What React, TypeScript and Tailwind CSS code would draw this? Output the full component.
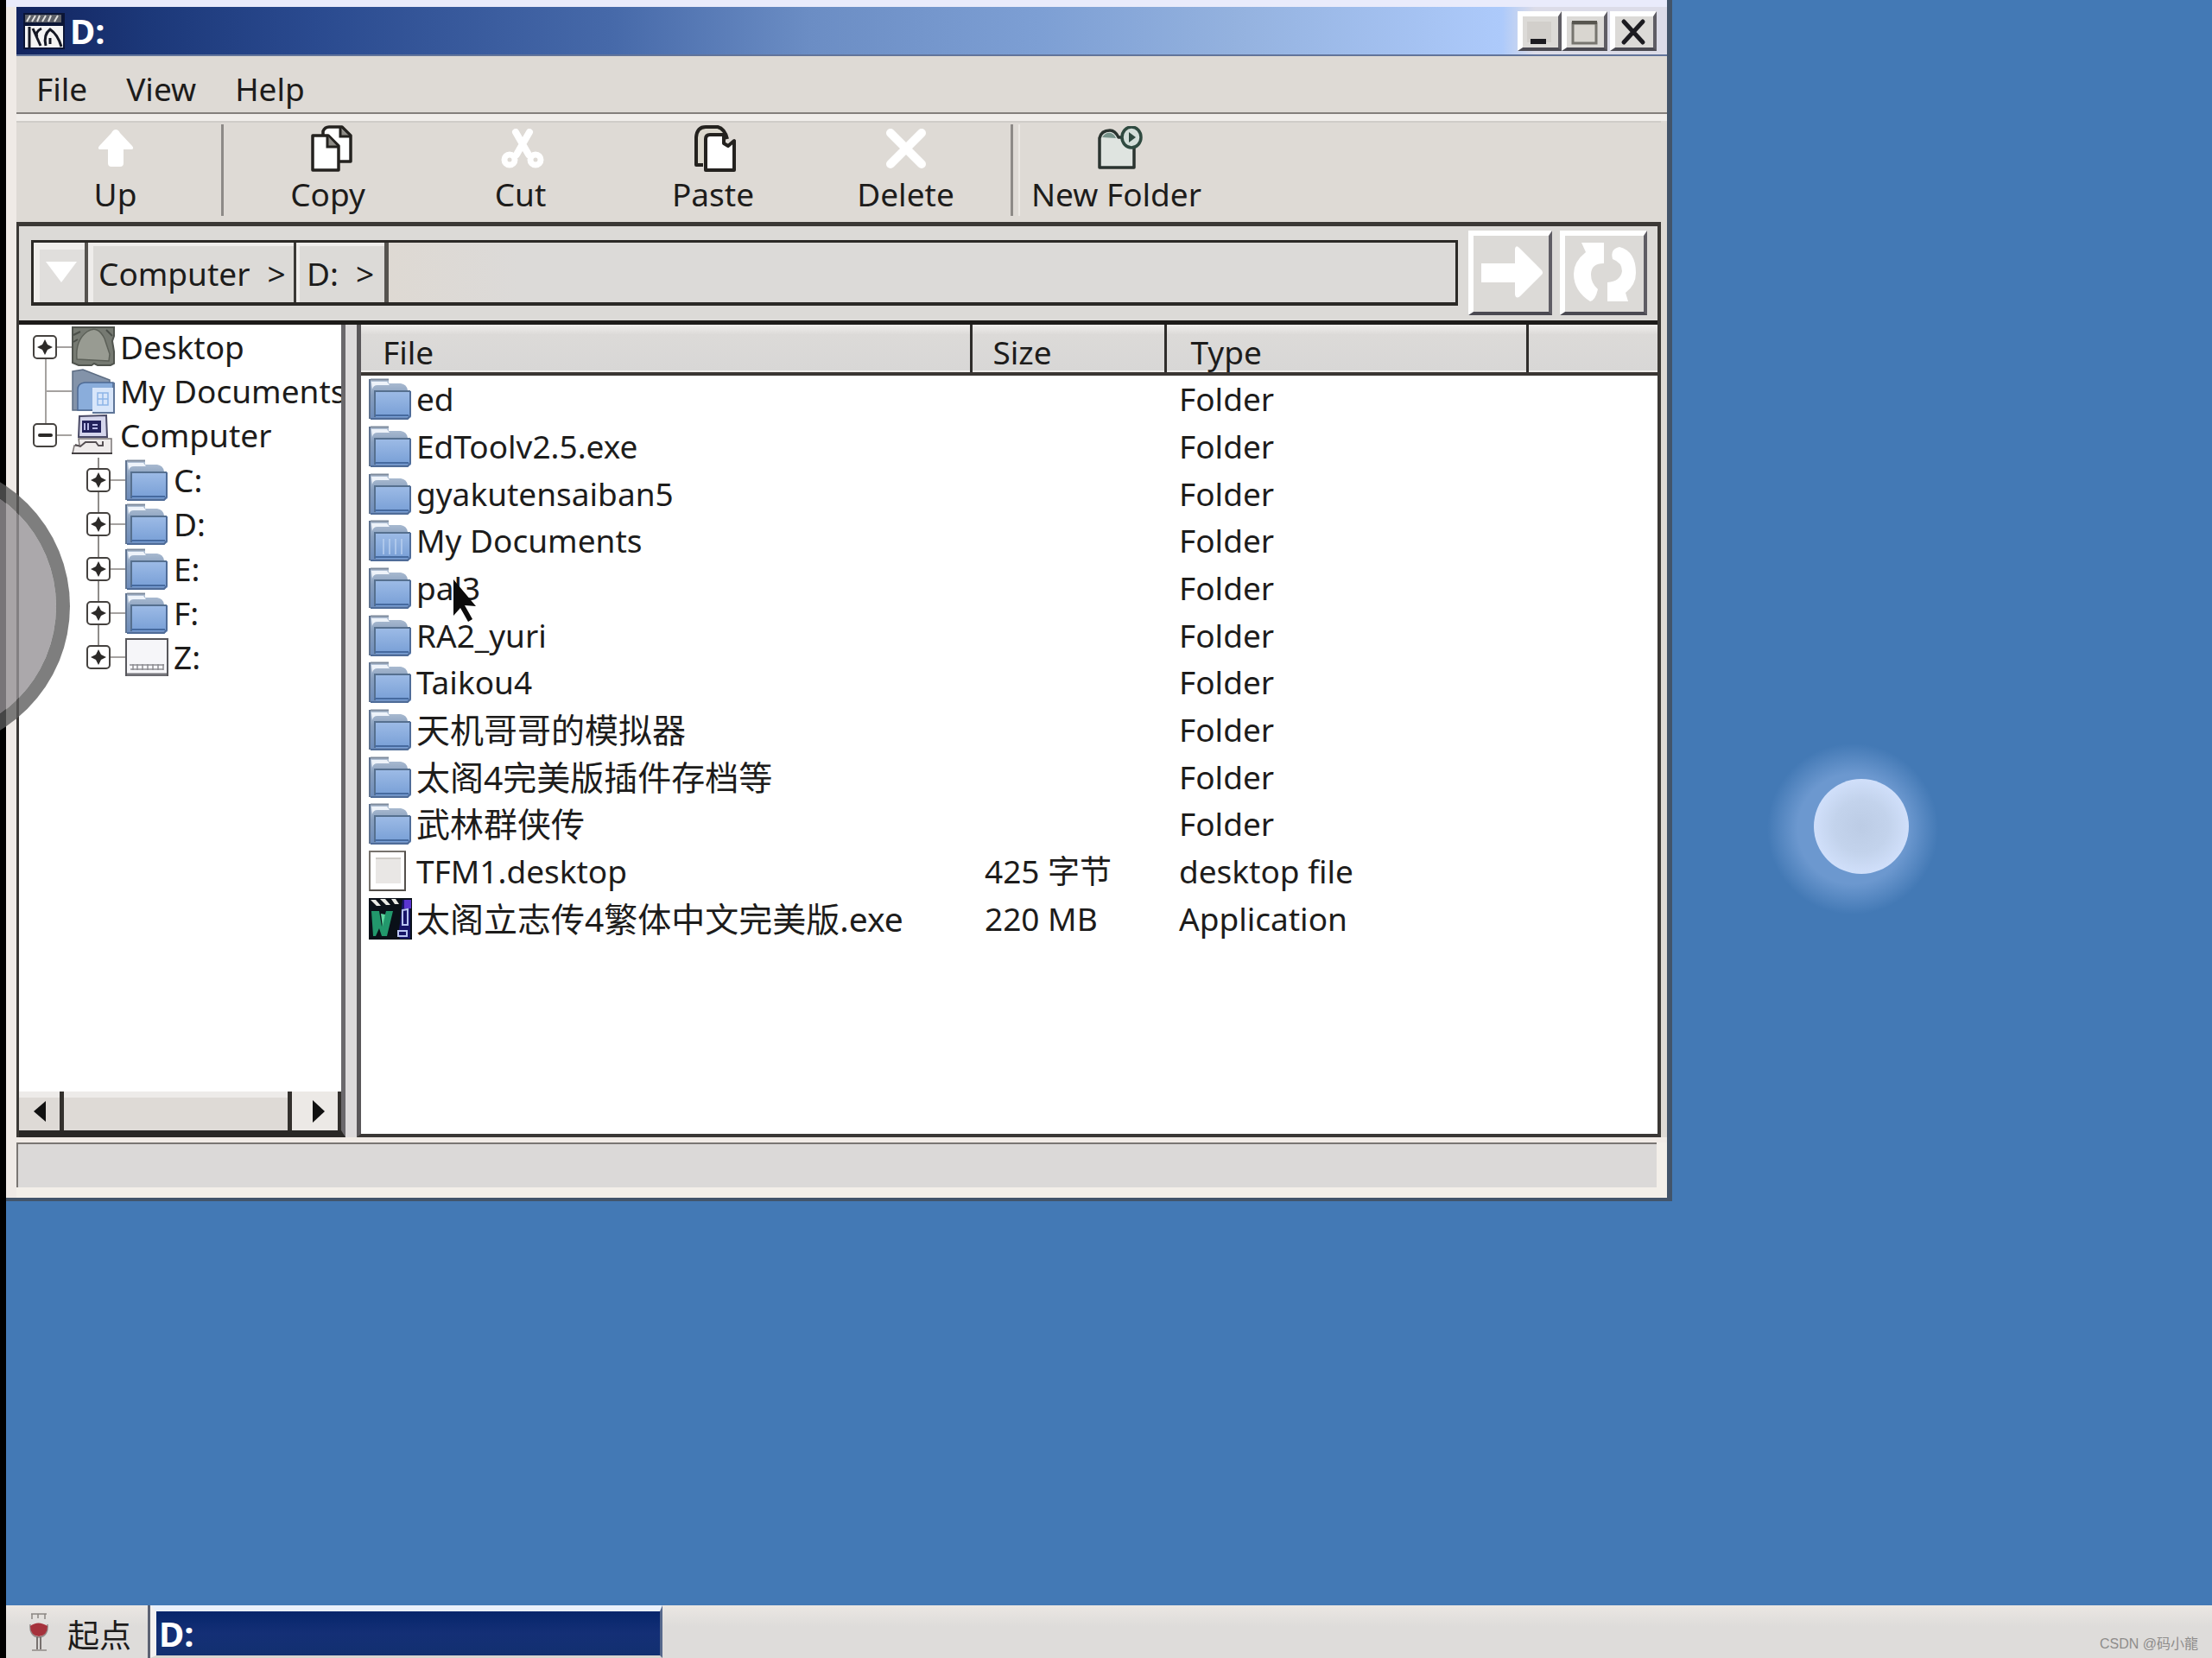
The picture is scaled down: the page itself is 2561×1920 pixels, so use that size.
import React from "react";

type Entry = { name: string; size?: string; type: string; icon: "folder" | "docs" | "file" | "app"; han?: boolean };

const entries: Entry[] = [
  { name: "ed", type: "Folder", icon: "folder" },
  { name: "EdToolv2.5.exe", type: "Folder", icon: "folder" },
  { name: "gyakutensaiban5", type: "Folder", icon: "folder" },
  { name: "My Documents", type: "Folder", icon: "docs" },
  { name: "pal3", type: "Folder", icon: "folder" },
  { name: "RA2_yuri", type: "Folder", icon: "folder" },
  { name: "Taikou4", type: "Folder", icon: "folder" },
  { name: "天机哥哥的模拟器", type: "Folder", icon: "folder", han: true },
  { name: "太阁4完美版插件存档等", type: "Folder", icon: "folder", han: true },
  { name: "武林群侠传", type: "Folder", icon: "folder", han: true },
  { name: "TFM1.desktop", size: "425 字节", type: "desktop file", icon: "file" },
  { name: "太阁立志传4繁体中文完美版.exe", size: "220 MB", type: "Application", icon: "app", han: true },
];

function FolderIcon({ docs = false }: { docs?: boolean }) {
  return (
    <svg viewBox="0 0 50 48" className="h-12 w-[50px] shrink-0" aria-hidden="true">
      <defs>
        <linearGradient id="front" x1="0" y1="0" x2="0" y2="1">
          <stop offset="0" stopColor="#9dbbe6" />
          <stop offset="1" stopColor="#789fd6" />
        </linearGradient>
        <linearGradient id="back" x1="0" y1="0" x2="0" y2="1">
          <stop offset="0" stopColor="#b4c3d6" />
          <stop offset="0.4" stopColor="#889fbe" />
          <stop offset="1" stopColor="#6d8cbb" />
        </linearGradient>
      </defs>
      <path d="M1 1h22v5h14q7 1 8 8l4 1v30l-3 2H1z" fill="url(#back)" />
      <path d="M2 1.5h21" stroke="#7d8a9c" strokeWidth="2" fill="none" />
      <path d="M3 4h18l3 4H10q-5 0-6 5z" fill="#eef3fa" />
      <path d="M1 1v46" stroke="#5f7390" strokeWidth="2" />
      <rect x="7" y="15" width="41" height="30" fill="url(#front)" />
      <path d="M7 45V15h41" stroke="#56708f" strokeWidth="2" fill="none" />
      <path d="M7 43h39" stroke="#466a9f" strokeWidth="2" />
      <path d="M48 15v28l-3 4H2" stroke="#4f6c98" strokeWidth="2" fill="none" />
      {docs && (
        <path d="M17 22v18M24 22v18M31 22v18M38 22v18" stroke="#bcd2f1" strokeWidth="2" opacity="0.7" />
      )}
    </svg>
  );
}

function FileIcon() {
  return (
    <svg viewBox="0 0 50 48" className="h-12 w-[50px] shrink-0" aria-hidden="true">
      <rect x="1" y="1" width="41" height="45" fill="#fff" stroke="#77736e" strokeWidth="2" />
      <path d="M42 1v45H1" stroke="#54504c" strokeWidth="2" fill="none" />
      <path d="M8 8h29v30H8z" fill="#e9e7e5" />
      <path d="M8 9h29" stroke="#cfccc8" strokeWidth="2" />
    </svg>
  );
}

function AppIcon() {
  return (
    <svg viewBox="0 0 50 48" className="h-12 w-[50px] shrink-0" aria-hidden="true">
      <rect width="50" height="48" fill="#0a1018" />
      <path d="M2 2h6l6 7H9zM13 1h6l6 7h-5zM26 1h5l4 6h-5z" fill="#e9e9e4" />
      <path d="M3 15h9l3 18 5-18h8l-7 29h-6l-3-9-4 9H5z" fill="#22986c" />
      <path d="M14 18l5 1-3 14z" fill="#5ed8a0" />
      <path d="M39 2h9v45H36l-2-4 2-14z" fill="#171468" />
      <path d="M41 2h8v10h-8z" fill="#5a35cf" />
      <path d="M39 14l6-1v18h-6zM34 38h10v6H34z" fill="none" stroke="#b9c4f2" strokeWidth="2" />
    </svg>
  );
}

function DesktopIcon() {
  return (
    <svg viewBox="0 0 50 48" className="h-12 w-[50px] shrink-0" aria-hidden="true">
      <path d="M1 1h48v10l-2 6 2 12v14l-4 2H30l-4-2-3 2H8l-7-3z" fill="#767a72" stroke="#50544e" strokeWidth="2" />
      <path d="M6 38q-2-22 12-32 12-8 20 8l6 18-1 8z" fill="#989b92" stroke="#5c6058" strokeWidth="1.5" />
      <path d="M2 10l8-4M2 18l5-3M40 4l7 7" stroke="#4b4f49" strokeWidth="2" />
    </svg>
  );
}

function DocumentsIcon() {
  return (
    <svg viewBox="0 0 50 52" className="h-[52px] w-[50px] shrink-0" aria-hidden="true">
      <path d="M1 3l12-2 31 12v5h4v30H1z" fill="#8393a9" stroke="#5c6c82" strokeWidth="1.5" />
      <path d="M7 48V24q0-7 8-8h33v32z" fill="#8aaddb" stroke="#4d6a94" strokeWidth="1.5" />
      <path d="M24 22h25v29H24z" fill="#d8e6fa" />
      <path d="M30 28h12v14H30zM36 28v14M30 35h12" fill="none" stroke="#8db5e8" strokeWidth="1.5" />
      <path d="M49 16v35H24" fill="none" stroke="#5e7598" strokeWidth="2" />
    </svg>
  );
}

function ComputerIcon() {
  return (
    <svg viewBox="0 0 50 50" className="h-[50px] w-[50px] shrink-0" aria-hidden="true">
      <path d="M9 3l31-1 1 25H8z" fill="#d5d6ec" stroke="#4a4a66" strokeWidth="2" />
      <path d="M12 8h22v14H12z" fill="#23235c" />
      <path d="M15 11v8M19 11v8M24 13h6M24 17h6" stroke="#b9bbe8" strokeWidth="2" />
      <path d="M8 29h38v17H1l2-9h6z" fill="#efecec" stroke="#7b7575" strokeWidth="1.5" />
      <path d="M4 36l6 2 6-5h12l3 4h5v-5" fill="none" stroke="#544e52" strokeWidth="2" />
      <path d="M0 46h47" stroke="#433f42" strokeWidth="2" />
    </svg>
  );
}

function DriveIcon() {
  return (
    <svg viewBox="0 0 50 46" className="h-[46px] w-[50px] shrink-0" aria-hidden="true">
      <rect x="1" y="2" width="48" height="42" fill="#f6f6f9" stroke="#57575c" strokeWidth="2" />
      <path d="M5 32h40M6 37h38M9 31v7M14 31v7M20 31v7M26 31v7M32 31v7M38 31v7M44 31v7" stroke="#8d8d92" strokeWidth="1.5" />
      <path d="M2 43h46" stroke="#77777c" strokeWidth="3" />
    </svg>
  );
}

function Expander({ open = false }: { open?: boolean }) {
  return (
    <button type="button" aria-label={open ? "Collapse" : "Expand"} className="relative z-10 h-7 w-7 shrink-0">
      <svg viewBox="0 0 28 28" className="h-7 w-7" aria-hidden="true">
        <rect x="1" y="1" width="26" height="26" rx="4" fill="#fff" stroke="#45423f" strokeWidth="2" />
        {open ? (
          <path d="M8 14h13" stroke="#2c2a28" strokeWidth="4" strokeLinecap="round" />
        ) : (
          <path d="M14 5l3 6 6 3-6 3-3 6-3-6-6-3 6-3z" fill="#2c2a28" />
        )}
      </svg>
    </button>
  );
}

function Drive({ name, last = false }: { name: string; last?: boolean }) {
  return (
    <li className="relative flex items-center pl-[78px]">
      <span className={`absolute left-[91px] top-0 w-0.5 bg-[#8f8c8a] ${last ? "h-1/2" : "h-full"}`} />
      <Expander />
      <span className="h-0.5 w-[17px] bg-[#a5a2a0]" />
      {last ? <DriveIcon /> : <FolderIcon />}
      <span className="pl-1.5">{name}</span>
    </li>
  );
}

function Tree() {
  return (
    <ul className="grid h-[411px] auto-rows-fr whitespace-nowrap">
      <li className="relative flex items-center pl-4">
        <span className="absolute bottom-0 left-[30px] h-1/2 w-0.5 bg-[#a5a2a0]" />
        <Expander />
        <span className="h-0.5 w-[17px] bg-[#a5a2a0]" />
        <DesktopIcon />
        <span className="pl-1.5">Desktop</span>
      </li>
      <li className="relative flex items-center pl-[30px]">
        <span className="absolute left-[30px] top-0 h-full w-0.5 bg-[#a5a2a0]" />
        <span className="h-0.5 w-[31px] bg-[#a5a2a0]" />
        <DocumentsIcon />
        <span className="pl-1.5">My Documents</span>
      </li>
      <li className="relative flex items-center pl-4">
        <span className="absolute left-[30px] top-0 h-1/2 w-0.5 bg-[#a5a2a0]" />
        <Expander open />
        <span className="h-0.5 w-[17px] bg-[#a5a2a0]" />
        <ComputerIcon />
        <span className="pl-1.5">Computer</span>
      </li>
      <Drive name="C:" />
      <Drive name="D:" />
      <Drive name="E:" />
      <Drive name="F:" />
      <Drive name="Z:" last />
    </ul>
  );
}

function ToolButton({ label, children }: { label: string; children: React.ReactNode }) {
  return (
    <button type="button" className="flex w-[223px] flex-col items-center">
      <span className="flex h-14 items-center">{children}</span>
      <span className="leading-[50px]">{label}</span>
    </button>
  );
}

const bevel =
  "flex items-center justify-center border-l-[6px] border-t-[6px] border-b-4 border-r-4 border-l-white border-t-white border-b-[#4b4a52] border-r-[#5f5d64] bg-[#dcdad7]";

function TitleBar() {
  return (
    <header className="flex h-[57px] items-center border-b-2 border-[#62749a] bg-[linear-gradient(90deg,#12245f_0%,#1c3879_8%,#2a4a8f_18%,#4669a9_36%,#6b8dc4_48%,#7d9fd4_62%,#94b2df_74%,#adcafb_90%,#dcdce8_92%)] pl-2 pr-3 text-white">
      <svg viewBox="0 0 48 42" className="h-[42px] w-12" aria-hidden="true">
        <rect width="48" height="42" fill="#0b1536" />
        <path d="M2 2h42v9H2z" fill="#5d6068" />
        <path d="M4 10l4-7M10 10l4-7M16 10l3-7M22 10l4-7M29 10l3-7M36 10l4-7" stroke="#dedede" strokeWidth="2" />
        <path d="M2 15h44v25H2z" fill="#f4f4f4" />
        <path d="M7 16v24M11 18l9 20M21 18q-8 4-5 10M26 38q-3-13 5-19 9 6 13 20M31 29v7" fill="none" stroke="#151824" strokeWidth="3" />
      </svg>
      <h1 className="grow pl-1.5 text-[40px] font-bold leading-[50px]">D:</h1>
      <div className="flex">
        <button type="button" aria-label="Minimize" className={`${bevel} h-[46px] w-[51px]`}>
          <svg viewBox="0 0 40 36" className="h-9 w-10"><path d="M4 6h28v24H4z" fill="#d2cfcb" /><path d="M8 26h18v6H8z" fill="#1c1b20" /></svg>
        </button>
        <button type="button" aria-label="Maximize" className={`${bevel} h-[46px] w-[53px]`}>
          <svg viewBox="0 0 40 36" className="h-9 w-10"><path d="M5 8h27v23H5z" fill="#d9d6d0" stroke="#77756f" strokeWidth="3" /><path d="M4 7h29" stroke="#57554f" strokeWidth="4" /></svg>
        </button>
        <button type="button" aria-label="Close" className={`${bevel} ml-[3px] h-[46px] w-[54px]`}>
          <svg viewBox="0 0 40 36" className="h-9 w-10"><path d="M8 6l22 24M30 6L8 30" stroke="#1c1b20" strokeWidth="5" strokeLinecap="round" /></svg>
        </button>
      </div>
    </header>
  );
}

function Toolbar() {
  return (
    <div className="flex h-[117px] border-t-2 border-[#cfccc8] pt-0.5">
      <button type="button" className="flex w-[240px] flex-col items-center self-start border-r-[3px] border-[#8d8a87] pr-2">
        <span className="flex h-14 items-center">
          <svg viewBox="0 0 42 44" className="h-11 w-[42px]"><path d="M21 0q3 0 5 4l14 15q3 4-2 4h-8v16q0 4-4 4H16q-4 0-4-4V23H4q-5 0-2-4L16 4q2-4 5-4z" fill="#fff" /></svg>
        </span>
        <span className="leading-[50px]">Up</span>
      </button>
      <div className="ml-[9px] flex">
        <ToolButton label="Copy">
          <svg viewBox="0 0 48 54" className="ml-2 h-[54px] w-12">
            <path d="M14 44V7q2-5 7-5h15l10 10v30H32" fill="#fff" stroke="#24221f" strokeWidth="3.5" strokeLinejoin="round" />
            <path d="M2 12h18l12 12v28H2z" fill="#fff" stroke="#24221f" strokeWidth="3.5" strokeLinejoin="round" />
            <path d="M19 12v13h12M34 3v10h11" fill="#8d8b85" stroke="#24221f" strokeWidth="3" />
          </svg>
        </ToolButton>
        <ToolButton label="Cut">
          <svg viewBox="0 0 50 46" className="ml-1 h-[46px] w-[50px]">
            <path d="M17 4l15 26M33 4L18 30" stroke="#fff" strokeWidth="8" strokeLinecap="round" />
            <circle cx="10" cy="36" r="6" fill="none" stroke="#fff" strokeWidth="7" />
            <circle cx="40" cy="36" r="6" fill="none" stroke="#fff" strokeWidth="7" />
          </svg>
        </ToolButton>
        <ToolButton label="Paste">
          <svg viewBox="0 0 48 54" className="ml-1 h-[54px] w-12">
            <path d="M10 46H2V14Q3 2 13 2h14q8 2 11 14" fill="#dcd8cd" stroke="#24221f" strokeWidth="4" strokeLinejoin="round" />
            <path d="M13 52V16q0-5 5-5h16v10l5 3 7-6v34z" fill="#fff" stroke="#24221f" strokeWidth="4" strokeLinejoin="round" />
          </svg>
        </ToolButton>
        <ToolButton label="Delete">
          <svg viewBox="0 0 48 46" className="h-[46px] w-12"><path d="M6 5l36 36M42 5L6 41" stroke="#fff" strokeWidth="10" strokeLinecap="round" /></svg>
        </ToolButton>
      </div>
      <div className="ml-2.5 h-[106px] w-[11px] border-l-[3px] border-r-2 border-l-[#8d8a87] border-r-[#ebe8e4]" />
      <ToolButton label="New Folder">
        <svg viewBox="0 0 54 52" className="ml-2 h-[52px] w-[54px]">
          <path d="M3 48V14q2-9 12-9 6 0 10 8h18v35z" fill="#dfe4e0" stroke="#2b3430" strokeWidth="3.5" strokeLinejoin="round" />
          <path d="M6 13q4-6 10-5 4 1 6 6z" fill="#77938a" />
          <ellipse cx="40" cy="13" rx="11" ry="12" fill="#d3ded9" stroke="#2f4a40" strokeWidth="3.5" />
          <path d="M37 7l8 6-8 6z" fill="#2f4a40" />
        </svg>
      </ToolButton>
    </div>
  );
}

function AddressBar() {
  return (
    <div className="flex h-[109px] items-center bg-[#dcdad7] pb-0.5 pl-[14px] pr-3">
      <div className="flex h-[76px] min-w-0 grow border-[3px] border-b-4 border-[#2b2926]">
        <button type="button" aria-label="History" className="flex w-[63px] shrink-0 items-center justify-center border-r-4 border-[#56534f] bg-[#e0dedc] shadow-[inset_7px_8px_0_#f0eeec]">
          <svg viewBox="0 0 36 26" className="ml-1 h-[26px] w-9"><path d="M0 1h36L18 25z" fill="#fff" /></svg>
        </button>
        <button type="button" className="flex w-[241px] shrink-0 items-center gap-5 border-r-[3px] border-[#3a3835] pl-3 pt-1 shadow-[inset_6px_4px_0_#efedeb]">
          <span>Computer</span>
          <span>&gt;</span>
        </button>
        <button type="button" className="flex w-[107px] shrink-0 items-center gap-5 border-r-[5px] border-[#56534f] pl-3 pt-1 shadow-[inset_4px_4px_0_#efedeb]">
          <span>D:</span>
          <span>&gt;</span>
        </button>
        <input aria-label="Address" type="text" className="min-w-0 grow bg-[linear-gradient(90deg,#ded9d3,#dcdad8_12%)] px-3 outline-none" />
      </div>
      <button type="button" aria-label="Go" className={`${bevel} ml-3 h-[98px] w-[97px]`}>
        <svg viewBox="0 0 72 60" className="mb-1 h-[60px] w-[72px]"><path d="M1 20h39V3q1-5 5-1l26 26q2 3 0 5L46 58q-5 4-6-2V42H1z" fill="#fff" /></svg>
      </button>
      <button type="button" aria-label="Refresh" className={`${bevel} ml-[9px] h-[98px] w-[101px]`}>
        <svg viewBox="0 0 74 70" className="mb-1 h-[70px] w-[74px]">
          <path d="M10 1h26v24q-15 0-15 13 0 10 8 17-3 13-9 14Q1 57 1 37q0-14 14-25z" fill="#fff" />
          <path d="M64 69H40V47q15-1 17-13 0-10-11-14-3-12 8-14 19 5 19 30 0 14-12 23z" fill="#fff" />
        </svg>
      </button>
    </div>
  );
}

function FileTable() {
  return (
    <table className="h-[715px] w-full table-fixed border-collapse whitespace-nowrap text-left">
      <colgroup>
        <col className="w-[706px]" />
        <col className="w-[225px]" />
        <col className="w-[419px]" />
        <col />
      </colgroup>
      <thead>
        <tr className="h-[57px] border-b-4 border-[#3a3633] bg-[linear-gradient(180deg,#efedeb_0%,#dcdad8_22%,#d8d7d6_100%)] leading-none">
          <th className="border-r-[3px] border-[#2e2c2a] pl-[25px] pt-2 font-normal">File</th>
          <th className="border-r-[3px] border-[#2e2c2a] pl-6 pt-2 font-normal">Size</th>
          <th className="border-r-[3px] border-[#2e2c2a] pl-7 pt-2 font-normal">Type</th>
          <th aria-label="Empty column" />
        </tr>
      </thead>
      <tbody className="leading-[50px]">
        {entries.map((e) => (
          <tr key={e.name}>
            <td className="p-0 pl-[9px]">
              <div className="flex items-center gap-[5px]">
                {e.icon === "file" ? <FileIcon /> : e.icon === "app" ? <AppIcon /> : <FolderIcon docs={e.icon === "docs"} />}
                <span className={e.han ? "text-[39px]" : ""}>{e.name}</span>
              </div>
            </td>
            <td className="p-0 pl-4">{e.size}</td>
            <td className="p-0 pl-4">{e.type}</td>
            <td />
          </tr>
        ))}
      </tbody>
    </table>
  );
}

function ExplorerWindow() {
  return (
    <section className="relative flex min-w-0 grow flex-col self-start border-b-4 border-r-[6px] border-[#42546a] bg-[#dedad5] pt-2 shadow-[inset_0_8px_0_#e9ebfb]">
      <div className="flex flex-col border-l-[12px] border-[#efeae6]">
        <TitleBar />
        <nav className="flex h-[67px] items-start gap-[45px] border-b-2 border-[#85807d] pl-[23px] pt-[13px] leading-[50px]">
          <button type="button">File</button>
          <button type="button">View</button>
          <button type="button">Help</button>
        </nav>
        <div className="h-2 bg-[#f1eeeb]" />
        <div className="mr-[7px]">
          <Toolbar />
          <div className="border-l-[3px] border-r-4 border-t-[5px] border-[#3b3835]">
            <AddressBar />
            <div className="flex min-h-[946px] border-t-[5px] border-[#1d1b19]">
              <div className="flex w-[378px] shrink-0 flex-col border-b-8 border-r-[5px] border-[#2a2826] border-r-[#6b686c] bg-white">
                <div className="grow overflow-hidden">
                  <Tree />
                </div>
                <div className="flex h-[45px] bg-[#dedad6] shadow-[inset_0_7px_0_#edebe9]">
                  <button type="button" aria-label="Scroll left" className="flex w-[52px] items-center justify-center border-r-[5px] border-[#33302d]">
                    <svg viewBox="0 0 14 24" className="h-6 w-3.5"><path d="M14 0v24L0 12z" fill="#111" /></svg>
                  </button>
                  <div className="grow" />
                  <button type="button" aria-label="Scroll right" className="flex w-[62px] items-center justify-center border-l-[5px] border-r-4 border-[#33302d] bg-[#ece9e6]">
                    <svg viewBox="0 0 14 26" className="ml-2 h-[26px] w-3.5"><path d="M0 0v26l14-13z" fill="#111" /></svg>
                  </button>
                </div>
              </div>
              <div className="w-[13px] shrink-0 bg-[#dddadb]" />
              <div className="min-w-0 grow border-b-4 border-l-[5px] border-[#3a3735] border-l-[#5a575a] bg-white">
                <FileTable />
              </div>
            </div>
          </div>
        </div>
        <div className="h-1.5 bg-[#f1ebe6]" />
        <footer className="h-16 border-b-[12px] border-r-[12px] border-[#f3efe9] bg-[#dbd9d8]">
          <div className="h-full border-l-2 border-t-2 border-[#7a7673]" />
        </footer>
      </div>
    </section>
  );
}

function Taskbar() {
  return (
    <footer className="ml-[7px] flex h-[61px] bg-[linear-gradient(180deg,#ebe7e3,#dedcda_40%)]">
      <button type="button" className="flex w-[167px] items-center border-r-[3px] border-[#5c6273] pl-[25px]">
        <svg viewBox="0 0 26 46" className="h-[46px] w-[26px]" aria-hidden="true">
          <path d="M4 2h18M5 2v6M12 2v5M20 2v6" stroke="#8b8683" strokeWidth="1.5" fill="none" />
          <path d="M3 14q-1 14 10 15 11-1 10-15" fill="#f1e7e5" stroke="#8f8a88" strokeWidth="1.5" />
          <path d="M3 16q9-7 20 0 0 11-10 12Q3 27 3 16z" fill="#a5323c" />
          <path d="M11 28v15M15 28v15" stroke="#77706e" strokeWidth="2" />
          <path d="M5 44h17" stroke="#a29d9a" strokeWidth="2" />
        </svg>
        <span className="whitespace-nowrap pl-5 pt-2">起点</span>
      </button>
      <button type="button" className="flex w-[593px] items-center border-b-[3px] border-l-[7px] border-r-[3px] border-t-[7px] border-b-[#d9d6cf] border-l-[#f3f1f0] border-r-[#56688c] border-t-[#e9f0fb] bg-[linear-gradient(180deg,#06266b,#142f76_50%,#123070)] pl-[3px]">
        <span className="text-[40px] font-bold leading-[50px] text-white">D:</span>
      </button>
      <div className="flex grow items-center justify-end pr-4 pt-7">
        <span className="font-['Liberation_Sans','Noto_Sans_CJK_SC',sans-serif] text-base leading-5 text-[#8e8c8b]">CSDN @码小龍</span>
      </div>
    </footer>
  );
}

export default function App() {
  return (
    <div className="relative flex min-h-screen flex-col overflow-hidden bg-[#4379b5] font-['Noto_Sans','Noto_Sans_CJK_SC',sans-serif] text-[37px] leading-[50px] text-[#1d1c1b]">
      <main className="flex grow pl-[7px]">
        <ExplorerWindow />
        <div className="relative w-[625px] shrink-0">
          <div className="absolute left-[109px] top-[860px] h-[200px] w-[200px] rounded-full bg-[radial-gradient(circle,#6c98cf_45%,#4379b500_70%)]" />
          <div className="absolute left-[164px] top-[902px] h-[110px] w-[110px] rounded-full bg-[radial-gradient(circle,#bccce5_0%,#c3d3ec_40%,#d0dffa_70%)]" />
        </div>
      </main>
      <Taskbar />
      <div className="absolute left-0 top-0 h-full w-[7px] bg-black" />
      <div className="absolute left-[-255px] top-[534px] h-[336px] w-[336px] rounded-full border-[16px] border-[#5a5a5ac7] bg-[#969296cc] bg-clip-padding" />
      <svg viewBox="0 0 30 50" className="absolute left-[523px] top-[670px] h-[50px] w-[30px]" aria-hidden="true">
        <path d="M2 1l26 31-13-1 9 16-5 3-9-16-8 9z" fill="#0b0a0a" />
      </svg>
    </div>
  );
}
